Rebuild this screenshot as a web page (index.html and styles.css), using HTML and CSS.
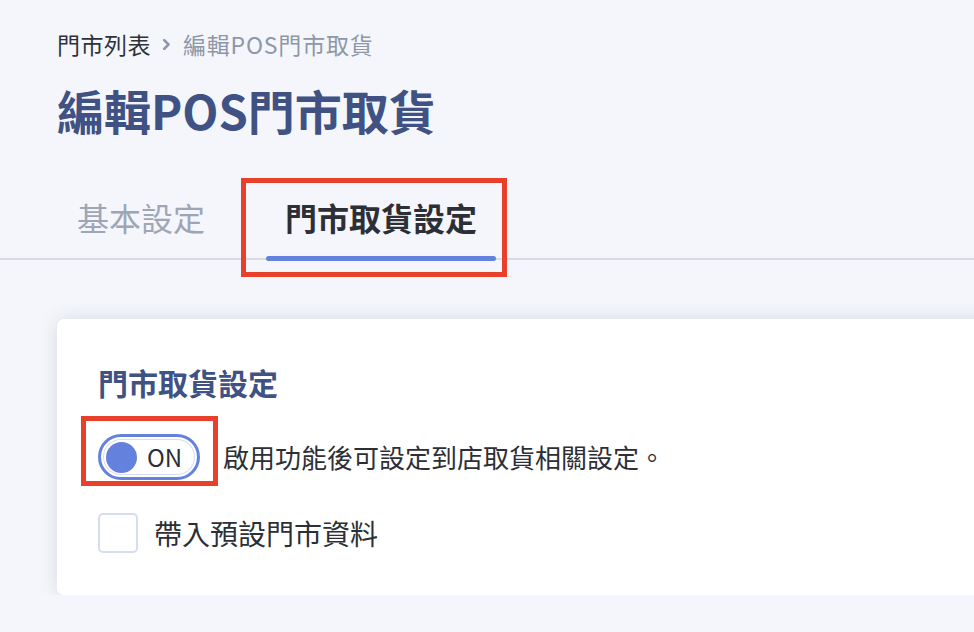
FILE: index.html
```html
<!DOCTYPE html>
<html lang="zh-Hant">
<head>
<meta charset="utf-8">
<title>編輯POS門市取貨</title>
<link rel="stylesheet" href="styles.css">
</head>
<body>
<div class="page">
  <nav class="breadcrumb">
    <span class="crumb-link">門市列表</span>
    <svg class="crumb-sep" width="9" height="13" viewBox="0 0 9 13"><path d="M2.2 2.2l4.3 4.3-4.3 4.3" fill="none" stroke="#8d97a8" stroke-width="2.6" stroke-linecap="round" stroke-linejoin="round"/></svg>
    <span class="crumb-current">編輯POS門市取貨</span>
  </nav>
  <h1 class="title">編輯POS門市取貨</h1>
</div>
<div class="tabs">
  <div class="tab">基本設定</div>
  <div class="tab tab-active">門市取貨設定<span class="annot annot-tab"></span></div>
</div>
<section class="card">
  <h2 class="card-title">門市取貨設定</h2>
  <div class="row toggle-row">
    <div class="toggle">
      <span class="knob"></span>
      <span class="toggle-label">ON</span>
      <span class="annot annot-toggle"></span>
    </div>
    <span class="row-text">啟用功能後可設定到店取貨相關設定。</span>
  </div>
  <div class="row check-row">
    <span class="checkbox"></span>
    <span class="row-text check-text">帶入預設門市資料</span>
  </div>
</section>
</body>
</html>
```
FILE: styles.css
```css
html, body {
  margin: 0;
  padding: 0;
  background: #f4f6fb;
  overflow: hidden;
  font-family: "Noto Sans CJK TC", "Noto Sans", sans-serif;
}
.page {
  padding: 29px 0 0 57px;
}
.breadcrumb {
  display: flex;
  align-items: center;
  font-size: 23px;
  line-height: 30px;
  height: 30px;
  letter-spacing: 0.5px;
}
.crumb-link { color: #2f3237; }
.crumb-sep { margin: 0 12px 0 11px; }
.crumb-current { color: #8d97a8; letter-spacing: 0.8px; }
.title {
  margin: 23px 0 0 0;
  font-size: 47px;
  line-height: 56px;
  font-weight: 700;
  color: #3f5283;
}
.tabs {
  display: flex;
  gap: 40px;
  margin-top: 57px;
  padding-left: 56px;
  border-bottom: 2px solid #d8dbe2;
}
.tab {
  position: relative;
  padding: 0 21px 19px;
  font-size: 32px;
  line-height: 44px;
  color: #9ea6b6;
}
.tab-active {
  color: #2d2f36;
  font-weight: 700;
  padding: 0 19px 19px;
}
.tab-active::after {
  content: "";
  position: absolute;
  left: 0;
  right: 0;
  bottom: -3px;
  height: 5px;
  border-radius: 3px;
  background: #6482dd;
}
.annot {
  position: absolute;
  border: 5px solid #e8402a;
  pointer-events: none;
}
.annot-tab {
  left: -25px;
  right: -11px;
  top: -17px;
  bottom: -19px;
}
.card {
  margin: 59px -30px 0 57px;
  background: #fff;
  border-radius: 7px;
  box-shadow: 0 0 18px rgba(30, 40, 70, 0.13);
  padding: 43px 41px 42px;
}
.card-title {
  margin: 0;
  font-size: 30px;
  line-height: 40px;
  font-weight: 700;
  color: #3f5283;
}
.row {
  display: flex;
  align-items: center;
}
.toggle-row {
  margin-top: 32px;
}
.toggle {
  position: relative;
  box-sizing: border-box;
  width: 102px;
  height: 46px;
  border: 3px solid #6482dd;
  border-radius: 23px;
  box-shadow: inset 0 0 0 2px #fff, inset 0 0 0 3px #d6def5;
  display: flex;
  align-items: center;
  padding-left: 5px;
}
.knob {
  width: 31px;
  height: 31px;
  border-radius: 50%;
  background: #6482dd;
}
.toggle-label {
  margin-left: 10px;
  font-size: 24px;
  color: #2d2f36;
  line-height: 1;
}
.annot-toggle {
  left: -20px;
  right: -21px;
  top: -21px;
  bottom: -9px;
}
.row-text {
  font-size: 26px;
  line-height: 36px;
  color: #2d2f36;
  margin-left: 23px;
}
.check-row {
  margin-top: 33px;
}
.checkbox {
  box-sizing: border-box;
  width: 40px;
  height: 40px;
  border: 2px solid #d5ddf0;
  border-radius: 5px;
  background: #fff;
}
.check-text {
  font-size: 28px;
  margin-left: 16px;
}
```
